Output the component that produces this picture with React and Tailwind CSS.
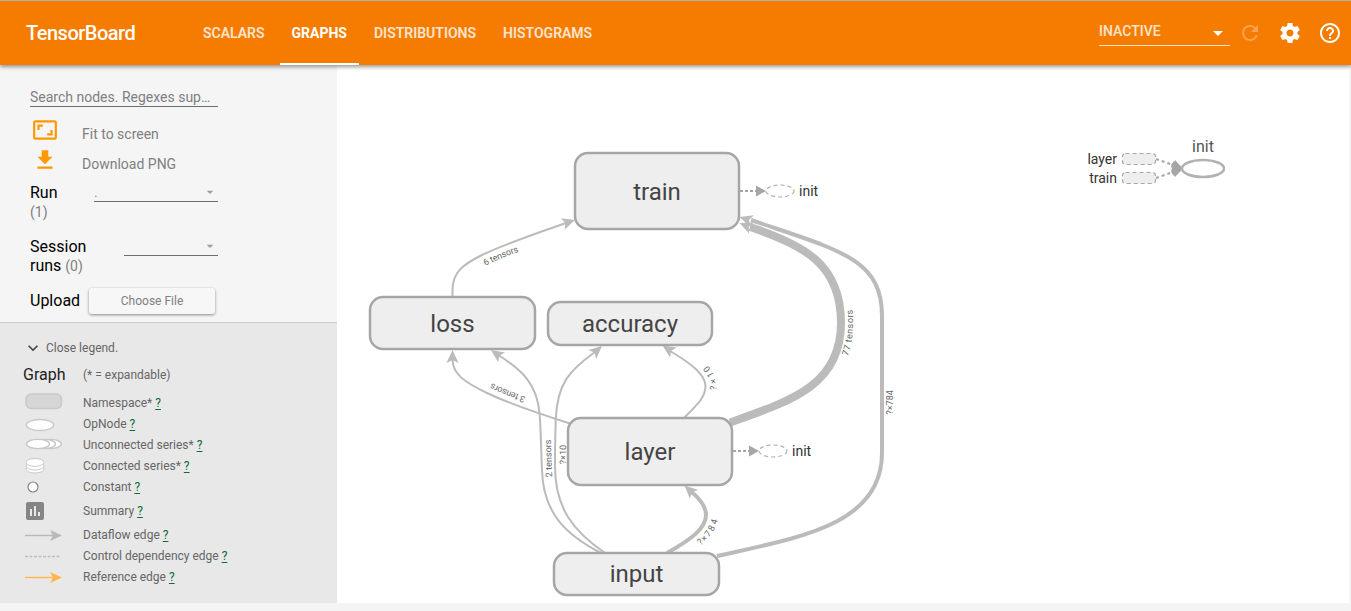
import React from "react";
import {
  MdArrowDropDown,
  MdAspectRatio,
  MdAssessment,
  MdExpandMore,
  MdHelpOutline,
  MdRefresh,
} from "react-icons/md";

const TABS = ["SCALARS", "GRAPHS", "DISTRIBUTIONS", "HISTOGRAMS"];

const NODES = [
  { name: "train", x: 575, y: 153, w: 164, h: 76, baseline: 200 },
  { name: "loss", x: 370, y: 297, w: 165, h: 52, baseline: 332 },
  { name: "accuracy", x: 548, y: 302, w: 164, h: 43, baseline: 332 },
  { name: "layer", x: 568, y: 418, w: 164, h: 67, baseline: 460 },
  { name: "input", x: 554, y: 553, w: 165, h: 42, baseline: 582 },
];

const EDGES = [
  {
    id: "loss-train", label: "6 tensors", width: 2, at: "50%", dy: 11,
    d: "M452.5 297V290C452.5 272 463 264.5 482 255S540 232 566 223",
    tip: [575, 220, -18],
  },
  {
    id: "layer-loss", label: "3 tensors", width: 2, at: "50%", dy: 11,
    d: "M570 423.5C540 414 510 404 487 393S453 374 452.5 360",
    tip: [452.5, 350, -90],
  },
  {
    id: "input-loss", label: "2 tensors", width: 2, at: "50%", dy: 10,
    d: "M601 553C566 535 543 513 542 470C541 450 541 430 539.5 413C537 384 522 370 499 355.5",
    tip: [491, 350, -145],
  },
  {
    id: "input-accuracy", label: "?×10", width: 2, at: "50%", dy: 11,
    d: "M605 553C573 531 555 508 555 466C555 452 555.3 435 555.7 420C557 383 570 370 595 352",
    tip: [602, 346, -41],
  },
  {
    id: "layer-accuracy", label: "?×10", width: 2, at: "50%", dy: 11,
    d: "M684 418C698 404 705.5 397 705.5 386C705.5 375 692 364 670 351",
    tip: [662.5, 345.5, -147],
  },
  {
    id: "input-layer", label: "?×784", width: 4, at: "50%", dy: 12,
    d: "M667 553C692 539 706 528 706 515C706 506 699 498 691 491.5",
    tip: [684.5, 485.5, -137],
  },
  {
    id: "layer-train", label: "77 tensors", width: 8, at: "50%", dy: 12,
    d: "M730 422.5C790 401 841 386 841 323C841 265 805 245 750 227",
    tip: [739.5, 223, -157],
  },
  {
    id: "input-train", label: "?×784", width: 4, at: "50%", dy: 11,
    d: "M717 556C796 538 882 526 882 453V316C882 258 838 250 751 220",
    tip: [739.5, 217, -162],
  },
];

function Select({ label, className, children, light }) {
  return (
    <div className={`relative flex ${className}`}>
      <select
        aria-label={label}
        className={
          light
            ? "w-full appearance-none border-b border-white/80 bg-transparent pb-1 text-sm font-medium text-white/80 outline-none"
            : "h-[19px] w-full appearance-none border-b border-[#6f6f6f] bg-transparent text-sm leading-4 text-[#8a9099] outline-none"
        }
      >
        {children}
      </select>
      <MdArrowDropDown
        className={
          light
            ? "pointer-events-none absolute right-0 top-0 size-6 text-white"
            : "pointer-events-none absolute right-0 top-px size-4 text-[#9e9e9e]"
        }
      />
    </div>
  );
}

function SettingsIcon() {
  return (
    <svg viewBox="0 0 24 24" className="size-6" fill="currentColor" aria-hidden="true">
      <path d="M19.43 12.98c.04-.32.07-.64.07-.98s-.03-.66-.07-.98l2.11-1.65c.19-.15.24-.42.12-.64l-2-3.46c-.12-.22-.39-.3-.61-.22l-2.49 1c-.52-.4-1.08-.73-1.69-.98l-.38-2.65C14.46 2.18 14.25 2 14 2h-4c-.25 0-.46.18-.49.42l-.38 2.65c-.61.25-1.17.59-1.69.98l-2.49-1c-.23-.09-.49 0-.61.22l-2 3.46c-.13.22-.07.49.12.64l2.11 1.65c-.04.32-.07.65-.07.98s.03.66.07.98l-2.11 1.65c-.19.15-.24.42-.12.64l2 3.46c.12.22.39.3.61.22l2.49-1c.52.4 1.08.73 1.69.98l.38 2.65c.03.24.24.42.49.42h4c.25 0 .46-.18.49-.42l.38-2.65c.61-.25 1.17-.59 1.69-.98l2.49 1c.23.09.49 0 .61-.22l2-3.46c.12-.22.07-.49-.12-.64l-2.11-1.65zM12 15.5c-1.93 0-3.5-1.57-3.5-3.5s1.57-3.5 3.5-3.5 3.5 1.57 3.5 3.5-1.57 3.5-3.5 3.5z" />
    </svg>
  );
}

function Header() {
  return (
    <header className="relative z-10 flex h-[65px] items-stretch border-t border-[#b0b0b0] bg-[#f57c00] pr-[9px] text-white shadow-[0_2px_4px_rgba(0,0,0,0.4)]">
      <h1 className="flex w-[191px] items-center pl-[26px] text-xl font-medium tracking-tight">TensorBoard</h1>
      <nav className="flex flex-1 gap-[3px] text-sm font-semibold">
        {TABS.map((tab) => (
          <a
            key={tab}
            href={`#${tab.toLowerCase()}`}
            className={
              tab === "GRAPHS"
                ? "flex items-center border-y-2 border-t-transparent border-b-white px-3 font-bold"
                : "flex items-center border-y-2 border-transparent px-3 text-white/80"
            }
          >
            {tab}
          </a>
        ))}
      </nav>
      <div className="flex items-center gap-4">
        <Select label="Inactive plugins" className="-mr-2 w-[131px]" light>
          <option>INACTIVE</option>
        </Select>
        <button aria-label="Refresh" disabled className="text-white/30">
          <MdRefresh className="size-6" />
        </button>
        <button aria-label="Settings">
          <SettingsIcon />
        </button>
        <button aria-label="Help">
          <MdHelpOutline className="size-6" />
        </button>
      </div>
    </header>
  );
}

function Controls() {
  return (
    <div className="w-[218px] pb-2 pl-[30px] pt-[23px] text-black">
      <input
        type="text"
        aria-label="Search nodes"
        placeholder="Search nodes. Regexes supported."
        className="block h-[19px] w-full text-ellipsis border-b border-[#6f6f6f] bg-transparent text-sm text-[#808080] outline-none placeholder:text-[#808080]"
      />
      <button className="mt-2 flex h-[30px] w-full items-center gap-6 pl-0.5 text-sm text-[#808080]">
        <MdAspectRatio className="size-[26px] text-[#ff9800]" />
        <span className="pt-2">Fit to screen</span>
      </button>
      <button className="flex h-[30px] w-full items-center gap-6 pl-0.5 text-sm text-[#808080]">
        <svg viewBox="0 0 24 24" className="size-[26px] text-[#ff9800]" fill="currentColor" aria-hidden="true">
          <path d="M19 9h-4V3H9v6H5l7 7 7-7zM5 18v2h14v-2H5z" />
        </svg>
        <span className="pt-2">Download PNG</span>
      </button>
      <div className="mt-2 flex justify-between">
        <div className="leading-5">
          Run
          <div className="text-sm leading-[18px] text-[#808080]">(1)</div>
        </div>
        <Select label="Run" className="w-[124px]">
          <option>.</option>
        </Select>
      </div>
      <div className="mt-4 flex justify-between">
        <div className="leading-[19px]">
          Session
          <br />
          runs <span className="text-sm leading-none text-[#808080]">(0)</span>
        </div>
        <Select label="Session runs" className="w-[94px]">
          <option></option>
        </Select>
      </div>
      <div className="mt-[13px] flex items-center gap-[9px] pr-[3px]">
        <span>Upload</span>
        <button className="h-[26px] flex-1 rounded-[3px] bg-[#f7f7f7] text-xs text-[#808080] shadow-[0_1px_3px_rgba(0,0,0,0.45)]">
          Choose File
        </button>
      </div>
    </div>
  );
}

function Symbol({ children }) {
  return (
    <svg viewBox="0 0 38 20" className="h-5 w-[38px] shrink-0" fill="#fff" stroke="#c9c9c9" aria-hidden="true">
      {children}
    </svg>
  );
}

const LEGEND = [
  {
    name: "Namespace*",
    art: <rect x="1" y="1" width="35.5" height="14.5" rx="5" fill="#d6d6d6" strokeWidth="1.5" />,
  },
  { name: "OpNode", art: <ellipse cx="15" cy="11" rx="13.7" ry="5.5" strokeWidth="1.5" /> },
  {
    name: "Unconnected series*",
    art: (
      <g strokeWidth="1.4">
        <ellipse cx="25" cy="9" rx="11.5" ry="4.6" />
        <ellipse cx="19" cy="9" rx="11.5" ry="4.6" />
        <ellipse cx="13" cy="9" rx="11.5" ry="4.6" />
      </g>
    ),
  },
  {
    name: "Connected series*",
    art: (
      <g>
        <ellipse cx="10" cy="13" rx="9" ry="4" />
        <ellipse cx="10" cy="10" rx="9" ry="4" />
        <ellipse cx="10" cy="6.4" rx="9" ry="4" />
      </g>
    ),
  },
  { name: "Constant", art: <circle cx="8" cy="10" r="5" stroke="#848484" strokeWidth="1.2" /> },
  { name: "Summary" },
  {
    name: "Dataflow edge",
    art: (
      <g fill="#b8b8b8" stroke="none">
        <path d="M0 9.8H28V11.2H0z" />
        <path d="M37 10.5L25 5L28 10.5L25 16z" />
      </g>
    ),
  },
  {
    name: "Control dependency edge",
    art: <path d="M0 10.5H36" fill="none" stroke="#bdbdbd" strokeDasharray="3 1.5" strokeWidth="1.3" />,
  },
  {
    name: "Reference edge",
    art: (
      <g fill="#ffb74d" stroke="none">
        <path d="M0 9.8H28V11.2H0z" />
        <path d="M37 10.5L25 5L28 10.5L25 16z" />
      </g>
    ),
  },
];

function Legend() {
  return (
    <section className="flex-1 border-t border-[#ccc] bg-[#e8e8e8] pb-3 pl-[25px] pt-[15px] text-xs text-[#666]">
      <button className="-ml-0.5 flex h-5 items-center gap-[3px]">
        <MdExpandMore className="size-5 text-[#444]" />
        Close legend.
      </button>
      <div className="flex h-[34px] items-center">
        <h2 className="-ml-0.5 w-[60px] text-base text-[#212121]">Graph</h2>
        <span>(* = expandable)</span>
      </div>
      <ul>
        {LEGEND.map(({ name, art }) => (
          <li key={name} className={art ? "flex h-[21px] items-center gap-5" : "flex h-[27px] items-center gap-5"}>
            {art ? (
              <Symbol>{art}</Symbol>
            ) : (
              <span className="flex w-[38px]">
                <MdAssessment className="-ml-0.5 size-6 text-[#858585]" />
              </span>
            )}
            <span>
              {name}{" "}
              <a href="#help" className="text-[#0f6b35] underline underline-offset-2">?</a>
            </span>
          </li>
        ))}
      </ul>
    </section>
  );
}

function InitAnnotation({ x, y }) {
  return (
    <g transform={`translate(${x} ${y})`}>
      <path d="M0 0H16" stroke="#a6a6a6" strokeWidth="2" strokeDasharray="3 2" />
      <path d="M16 -5.5L26 0L16 5.5z" fill="#a6a6a6" />
      <ellipse cx="40" cy="0" rx="14" ry="6" fill="#fff" stroke="#b2b2b2" strokeWidth="1.2" strokeDasharray="4 3" />
      <text x="59" y="5" fontSize="14" fill="#333">init</text>
    </g>
  );
}

function Graph() {
  return (
    <svg viewBox="337 65 1012 538" className="block h-auto w-full" role="img" aria-label="Model graph">
      {EDGES.map((e) => (
        <g key={e.id}>
          <path id={e.id} d={e.d} fill="none" stroke="#bbb" strokeWidth={e.width} />
          <path
            d="M0 0L-13 -6L-10 0L-13 6z"
            fill="#bbb"
            transform={`translate(${e.tip[0]} ${e.tip[1]}) rotate(${e.tip[2]})`}
          />
          <text fontSize="9" fill="#666" textAnchor="middle" dy={e.dy}>
            <textPath href={`#${e.id}`} startOffset={e.at}>{e.label}</textPath>
          </text>
        </g>
      ))}
      {NODES.map((n) => (
        <g key={n.name}>
          <rect x={n.x} y={n.y} width={n.w} height={n.h} rx="13" fill="#eee" stroke="#a6a6a6" strokeWidth="2.5" />
          <text x={n.x + n.w / 2} y={n.baseline} fontSize="24" fill="#444" textAnchor="middle">
            {n.name}
          </text>
        </g>
      ))}
      <InitAnnotation x={740} y={191} />
      <InitAnnotation x={733} y={451} />
      <g fill="#333" fontSize="14" textAnchor="end">
        <text x="1117" y="164">layer</text>
        <text x="1117" y="183">train</text>
      </g>
      <g fill="#eee" stroke="#a6a6a6" strokeWidth="1.2" strokeDasharray="4 3">
        <rect x="1122.5" y="153.5" width="33" height="11" rx="3" />
        <rect x="1122.5" y="172.5" width="33" height="11" rx="3" />
      </g>
      <g fill="none" stroke="#a6a6a6" strokeWidth="2" strokeDasharray="3 3">
        <path d="M1156 159L1173 165" />
        <path d="M1156 178L1173 172" />
      </g>
      <g fill="#a6a6a6">
        <path d="M1175 160L1183 168.5L1171 171z" />
        <path d="M1175 177L1183 168.5L1171 166z" />
      </g>
      <path d="M1174 161L1183 168.5L1174 176L1171 172L1173 168.500L1171 165z" fill="#a6a6a6" />
      <ellipse cx="1203" cy="168.5" rx="21" ry="8.5" fill="#fff" stroke="#b2b2b2" strokeWidth="2.5" />
      <text x="1203" y="152" fontSize="16" fill="#555" textAnchor="middle">init</text>
    </svg>
  );
}

export default function App() {
  return (
    <div className="min-h-screen bg-[#f4f4f4] font-[Roboto,sans-serif]">
      <Header />
      <div className="flex pr-0.5">
        <aside className="flex w-[337px] shrink-0 flex-col bg-[#f5f5f5]">
          <Controls />
          <Legend />
        </aside>
        <main className="min-w-0 flex-1 bg-white">
          <Graph />
        </main>
      </div>
    </div>
  );
}
